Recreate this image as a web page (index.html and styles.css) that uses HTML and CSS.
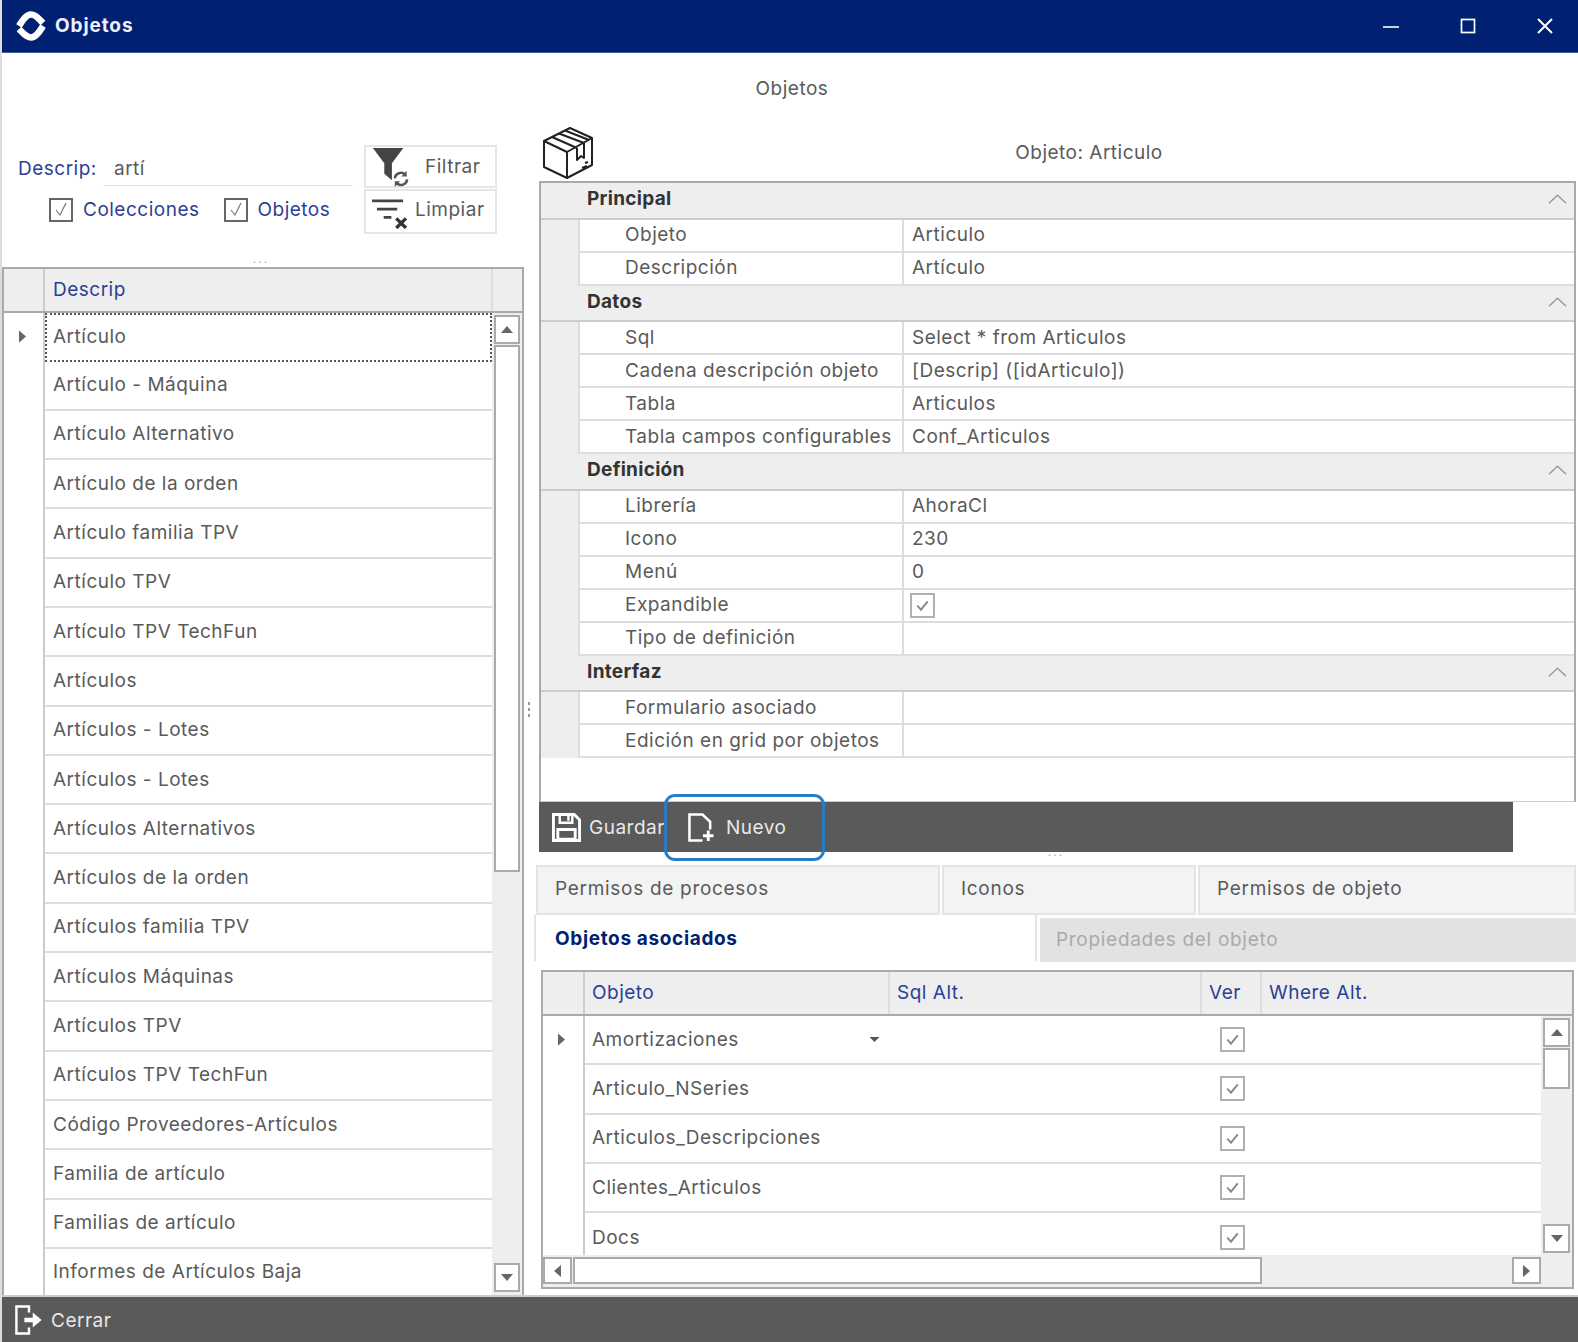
FILE: index.html
```html
<!DOCTYPE html>
<html lang="es">
<head>
<meta charset="utf-8">
<title>Objetos</title>
<link rel="stylesheet" href="styles.css">
</head>
<body>
<div class="window">
  <header class="titlebar">
    <svg class="logo" viewBox="0 0 30 30"><g fill="none" stroke="#fff" stroke-width="6.500"><path d="M3 15 C6 10 10 3.500 15 3.500 C20 3.500 23 8 27 12"/><path d="M27 15 C24 20 20 26.500 15 26.500 C10 26.500 7 22 3 18"/></g></svg>
    <span class="titlebar-text">Objetos</span>
    <div class="winbtns">
      <svg viewBox="0 0 16 16"><path d="M0 9 H16" stroke="#fff" stroke-width="1.6"/></svg>
      <svg viewBox="0 0 16 16"><rect x="1.500" y="1.500" width="13" height="13" fill="none" stroke="#fff" stroke-width="1.700"/></svg>
      <svg viewBox="0 0 16 16"><path d="M1 1 L15 15 M15 1 L1 15" stroke="#fff" stroke-width="2"/></svg>
    </div>
  </header>

  <div class="form-title">Objetos</div>

  <main class="columns">
    <section class="left">
      <div class="filter">
        <div class="filter-fields">
          <div class="search"><span class="label">Descrip:</span><span class="search-value">artí</span></div>
          <div class="checks">
            <span class="check"><i class="box"><svg viewBox="0 0 20 20"><path d="M5 10 L9 15 L15 3" fill="none" stroke="#777" stroke-width="1.200"/></svg></i>Colecciones</span>
            <span class="check"><i class="box"><svg viewBox="0 0 20 20"><path d="M5 10 L9 15 L15 3" fill="none" stroke="#777" stroke-width="1.200"/></svg></i>Objetos</span>
          </div>
        </div>
        <div class="filter-btns">
          <div class="fbtn fbtn-filter">
            <svg class="fbtn-icon" viewBox="0 0 38 42"><path d="M1 1 H33 L21 17 V35 L13 28 V17 Z" fill="#444"/><g fill="none" stroke="#555" stroke-width="2.600"><path d="M24 33 A6.500 6.500 0 0 1 35 29"/><path d="M37 34 A6.500 6.500 0 0 1 26 38"/></g><path d="M36.500 25 V31 H31 Z M24 42 V36 H29.500 Z" fill="#555"/></svg>
            <span>Filtrar</span>
          </div>
          <div class="fbtn fbtn-clear">
            <svg class="fbtn-icon" viewBox="0 0 38 32"><path d="M1 3 H33 M6 11.500 H27 M13 20 H21" stroke="#444" stroke-width="3" fill="none"/><path d="M26 21 L36 31 M36 21 L26 31" stroke="#333" stroke-width="3.400"/></svg>
            <span>Limpiar</span>
          </div>
        </div>
      </div>
      <div class="grip-h">...</div>
      <div class="grid left-grid">
        <div class="grid-head">
          <div class="head-stub"></div>
          <div class="head-cell head-descrip">Descrip</div>
          <div class="head-fill"></div>
        </div>
        <div class="grid-body">
          <div class="stub-col"><svg class="marker" viewBox="0 0 8 14"><path d="M0 0 L8 7 L0 14Z" fill="#666"/></svg></div>
          <div class="rows">
            <div class="row row-current">Artículo</div>
            <div class="row">Artículo - Máquina</div>
            <div class="row">Artículo Alternativo</div>
            <div class="row">Artículo de la orden</div>
            <div class="row">Artículo familia TPV</div>
            <div class="row">Artículo TPV</div>
            <div class="row">Artículo TPV TechFun</div>
            <div class="row">Artículos</div>
            <div class="row">Artículos - Lotes</div>
            <div class="row">Artículos - Lotes</div>
            <div class="row">Artículos Alternativos</div>
            <div class="row">Artículos de la orden</div>
            <div class="row">Artículos familia TPV</div>
            <div class="row">Artículos Máquinas</div>
            <div class="row">Artículos TPV</div>
            <div class="row">Artículos TPV TechFun</div>
            <div class="row">Código Proveedores-Artículos</div>
            <div class="row">Familia de artículo</div>
            <div class="row">Familias de artículo</div>
            <div class="row">Informes de Artículos Baja</div>
          </div>
          <div class="vscroll vscroll-left">
            <div class="sbtn"><svg viewBox="0 0 12 7"><path d="M0 7 L6 0 L12 7Z"/></svg></div>
            <div class="thumb thumb-left"></div>
            <div class="track"></div>
            <div class="sbtn"><svg viewBox="0 0 12 7"><path d="M0 0 L12 0 L6 7Z"/></svg></div>
          </div>
        </div>
      </div>
    </section>

    <div class="grip-v"><i></i><i></i><i></i></div>

    <section class="right">
      <div class="object-head">
        <svg class="box-icon" viewBox="0 0 52 52"><g fill="none" stroke="#222" stroke-width="2" stroke-linejoin="round"><path d="M2 14 L28 1 L50 11 V38 L25 51 L2 40 Z"/><path d="M2 14 L25 25 L50 11"/><path d="M25 25 V51"/><path d="M10 10 L35 21 M17 6.500 L42 16 M23 3.500 L47 13"/><path d="M35 21 V33 L39 29 L42 31 V16"/><path d="M43 36 L46 35 M40 41 L45 39"/></g></svg>
        <div class="object-title">Objeto: Articulo</div>
      </div>

      <div class="props">
        <div class="cat">Principal<svg viewBox="0 0 20 10"><path d="M1 9.500 L10 1 L19 9.500" fill="none" stroke="#999" stroke-width="1.500"/></svg></div>
        <div class="prop"><span>Objeto</span><span>Articulo</span></div>
        <div class="prop"><span>Descripción</span><span>Artículo</span></div>
        <div class="cat">Datos<svg viewBox="0 0 20 10"><path d="M1 9.500 L10 1 L19 9.500" fill="none" stroke="#999" stroke-width="1.500"/></svg></div>
        <div class="prop"><span>Sql</span><span>Select * from Articulos</span></div>
        <div class="prop"><span>Cadena descripción objeto</span><span>[Descrip] ([idArticulo])</span></div>
        <div class="prop"><span>Tabla</span><span>Articulos</span></div>
        <div class="prop"><span>Tabla campos configurables</span><span>Conf_Articulos</span></div>
        <div class="cat">Definición<svg viewBox="0 0 20 10"><path d="M1 9.500 L10 1 L19 9.500" fill="none" stroke="#999" stroke-width="1.500"/></svg></div>
        <div class="prop"><span>Librería</span><span>AhoraCl</span></div>
        <div class="prop"><span>Icono</span><span>230</span></div>
        <div class="prop"><span>Menú</span><span>0</span></div>
        <div class="prop"><span>Expandible</span><span><i class="cb cb-prop"><svg viewBox="0 0 20 20"><path d="M5 10 L8.500 14 L15 6" fill="none" stroke="#888" stroke-width="1.800"/></svg></i></span></div>
        <div class="prop"><span>Tipo de definición</span><span></span></div>
        <div class="cat">Interfaz<svg viewBox="0 0 20 10"><path d="M1 9.500 L10 1 L19 9.500" fill="none" stroke="#999" stroke-width="1.500"/></svg></div>
        <div class="prop"><span>Formulario asociado</span><span></span></div>
        <div class="prop"><span>Edición en grid por objetos</span><span></span></div>
      </div>

      <div class="toolbar">
        <div class="tool tool-save">
          <svg viewBox="0 0 30 30"><path d="M1.500 1.500 H23 L28.500 7 V28.500 H1.500 Z" fill="none" stroke="#fff" stroke-width="3"/><path d="M8 1.500 V10 H21 V1.500 M17 3 V8" fill="none" stroke="#fff" stroke-width="2.500"/><path d="M6 17 H24 V27 H6 Z" fill="none" stroke="#fff" stroke-width="3"/></svg>
          <span>Guardar</span>
        </div>
        <div class="tool tool-new">
          <svg viewBox="0 0 28 30"><path d="M15 28.500 H1.500 V1.500 H15 L23 9 V17" fill="none" stroke="#fff" stroke-width="2.600"/><path d="M21 18 V29 M15.500 23.500 H26.500" stroke="#fff" stroke-width="3"/></svg>
          <span>Nuevo</span>
        </div>
      </div>
      <div class="grip-h grip-right">...</div>

      <div class="tabs tabs-top">
        <div class="tab tab-a">Permisos de procesos</div>
        <div class="tab tab-b">Iconos</div>
        <div class="tab tab-c">Permisos de objeto</div>
      </div>
      <div class="tabs tabs-bottom">
        <div class="tab-active">Objetos asociados</div>
        <div class="tab-disabled">Propiedades del objeto</div>
      </div>

      <div class="grid assoc">
        <div class="grid-head assoc-head">
          <div class="head-stub"></div>
          <div class="head-cell col-obj">Objeto</div>
          <div class="head-cell col-sql">Sql Alt.</div>
          <div class="head-cell col-ver">Ver</div>
          <div class="head-cell col-where">Where Alt.</div>
        </div>
        <div class="grid-body assoc-body">
          <div class="stub-col"><svg class="marker" viewBox="0 0 8 14"><path d="M0 0 L8 7 L0 14Z" fill="#666"/></svg></div>
          <div class="rows">
            <div class="arow"><span class="col-obj cell-combo">Amortizaciones<svg viewBox="0 0 12 6"><path d="M0 0 H12 L6 6Z" fill="#555"/></svg></span><span class="col-sql"></span><span class="col-ver"><i class="cb"><svg viewBox="0 0 20 20"><path d="M5 10 L8.500 14 L15 6" fill="none" stroke="#888" stroke-width="1.800"/></svg></i></span></div>
            <div class="arow"><span class="col-obj">Articulo_NSeries</span><span class="col-sql"></span><span class="col-ver"><i class="cb"><svg viewBox="0 0 20 20"><path d="M5 10 L8.500 14 L15 6" fill="none" stroke="#888" stroke-width="1.800"/></svg></i></span></div>
            <div class="arow"><span class="col-obj">Articulos_Descripciones</span><span class="col-sql"></span><span class="col-ver"><i class="cb"><svg viewBox="0 0 20 20"><path d="M5 10 L8.500 14 L15 6" fill="none" stroke="#888" stroke-width="1.800"/></svg></i></span></div>
            <div class="arow"><span class="col-obj">Clientes_Articulos</span><span class="col-sql"></span><span class="col-ver"><i class="cb"><svg viewBox="0 0 20 20"><path d="M5 10 L8.500 14 L15 6" fill="none" stroke="#888" stroke-width="1.800"/></svg></i></span></div>
            <div class="arow"><span class="col-obj">Docs</span><span class="col-sql"></span><span class="col-ver"><i class="cb"><svg viewBox="0 0 20 20"><path d="M5 10 L8.500 14 L15 6" fill="none" stroke="#888" stroke-width="1.800"/></svg></i></span></div>
          </div>
          <div class="vscroll vscroll-assoc">
            <div class="sbtn"><svg viewBox="0 0 12 7"><path d="M0 7 L6 0 L12 7Z"/></svg></div>
            <div class="thumb thumb-assoc"></div>
            <div class="track"></div>
            <div class="sbtn"><svg viewBox="0 0 12 7"><path d="M0 0 L12 0 L6 7Z"/></svg></div>
          </div>
        </div>
        <div class="hscroll">
          <div class="sbtn sbtn-h"><svg viewBox="0 0 7 12"><path d="M7 0 L0 6 L7 12Z"/></svg></div>
          <div class="hthumb"></div>
          <div class="track"></div>
          <div class="sbtn sbtn-h"><svg viewBox="0 0 7 12"><path d="M0 0 L7 6 L0 12Z"/></svg></div>
        </div>
      </div>
    </section>
  </main>

  <footer class="footer">
    <svg viewBox="0 0 30 32"><path d="M15 8 V1.500 H1.500 V30.500 H15 V24" fill="none" stroke="#fff" stroke-width="2.600"/><path d="M10 13.500 H19 V8 L28.500 16 L19 24 V18.500 H10 Z" fill="#fff"/></svg>
    <span>Cerrar</span>
  </footer>
</div>
</body>
</html>
```

FILE: styles.css
```css
* { box-sizing: border-box; }
html, body { margin: 0; height: 100%; }
body {
  font-family: Inter, "Noto Sans", sans-serif;
  font-size: 19px;
  letter-spacing: 0.5px;
  line-height: 22px;
  color: #5a5a5a;
  background: #fff;
  overflow: hidden;
}
i { font-style: normal; }
svg { display: block; flex: none; }

.window {
  width: 1578px;
  height: 1342px;
  display: flex;
  flex-direction: column;
  border-left: 2px solid #ddd;
}

/* Title bar */
.titlebar {
  height: 53px;
  flex: none;
  background: #002171;
  border-bottom: 1px solid #3d5a9e;
  display: flex;
  align-items: center;
  padding-left: 14px;
  color: #fff;
}
.logo { width: 30px; height: 30px; }
.titlebar-text { margin-left: 9px; font-weight: 700; font-size: 19px; letter-spacing: 0.9px; color: #eef; }
.winbtns { margin-left: auto; display: flex; gap: 61px; padding-right: 25px; }
.winbtns svg { width: 16px; height: 16px; }

.form-title {
  height: 73px;
  flex: none;
  padding-top: 25px;
  padding-left: 4px;
  text-align: center;
}

.columns { flex: 1; display: flex; min-height: 0; }

/* Left column */
.left { width: 522px; flex: none; display: flex; flex-direction: column; }
.filter { height: 132px; display: flex; padding: 19px 27px 0 16px; flex: none; }
.filter-fields { flex: 1; min-width: 0; }
.search { display: flex; align-items: flex-end; height: 41px; }
.label { color: #2b3f97; width: 85px; flex: none; padding-bottom: 6px; }
.search-value {
  width: 250px;
  height: 41px;
  line-height: 47px;
  padding-left: 11px;
  border-bottom: 1px solid #e4e4e4;
}
.checks { display: flex; padding-left: 31px; margin-top: 12px; gap: 24px; }
.check { display: flex; align-items: center; gap: 10px; color: #2b3f97; height: 24px; white-space: nowrap; }
.box { width: 24px; height: 24px; border: 2px solid #666; background: #fff; display: block; }
.box svg { width: 20px; height: 20px; }
.filter-btns { width: 133px; flex: none; display: flex; flex-direction: column; gap: 1px; margin-left: 10px; height: 90px; }
.fbtn { border: 2px solid #e6e6e6; display: flex; align-items: center; }
.fbtn-filter { height: 43px; padding-left: 5px; gap: 16px; }
.fbtn-clear { height: 45px; padding-left: 5px; gap: 7px; }
.fbtn-filter .fbtn-icon { width: 38px; height: 40px; }
.fbtn-clear .fbtn-icon { width: 37px; height: 31px; margin-top: 4px; }
.fbtn-clear span { padding-bottom: 3px; }

.grip-h {
  height: 9px;
  flex: none;
  line-height: 2px;
  text-align: center;
  color: #aaa;
  letter-spacing: 2px;
  font-size: 12px;
  padding-right: 4px;
}

.grid { border: 2px solid #aaa; display: flex; flex-direction: column; min-height: 0; }
.left-grid { flex: 1; border-bottom: 0; background: #fff; }
.grid-head { display: flex; height: 44px; flex: none; background: #eee; border-bottom: 2px solid #aaa; color: #2b3f97; }
.head-stub { width: 41px; flex: none; border-right: 2px solid #ccc; }
.head-cell { display: flex; align-items: center; padding-left: 8px; border-right: 2px solid #ddd; }
.head-descrip { width: 448px; flex: none; }
.head-fill { flex: 1; }

.grid-body { flex: 1; display: flex; min-height: 0; overflow: hidden; }
.stub-col { width: 41px; flex: none; border-right: 2px solid #ccc; }
.marker { width: 7px; height: 13px; margin: 17px 0 0 15px; }
.rows { flex: 1; min-width: 0; }
.row {
  height: 49.3px;
  padding-left: 8px;
  border-bottom: 2px solid #ddd;
  display: flex;
  align-items: center;
  white-space: nowrap;
}
.row-current { height: 48.500px; outline: 2px dotted #555; outline-offset: -2px; border-bottom: 0; }

.vscroll { flex: none; background: #eee; display: flex; flex-direction: column; }
.vscroll-left { width: 30px; padding: 2px 2px 3px 2px; }
.vscroll-assoc { width: 31px; padding: 2px; }
.sbtn {
  height: 29px;
  flex: none;
  background: #fff;
  border: 2px solid #aaa;
  display: flex;
  align-items: center;
  justify-content: center;
}
.sbtn svg { width: 12px; height: 7px; fill: #666; }
.thumb { background: #fff; border: 2px solid #aaa; flex: none; }
.thumb-left { height: 527px; margin-top: 1px; }
.thumb-assoc { height: 41px; margin-top: 1px; }
.track { flex: 1; }

/* Splitter */
.grip-v { width: 10px; flex: none; display: flex; flex-direction: column; align-items: center; gap: 3px; padding-top: 576px; }
.grip-v i { width: 2px; height: 3px; background: #999; }

/* Right column */
.right { flex: 1; min-width: 0; display: flex; flex-direction: column; }
.object-head { height: 55px; flex: none; display: flex; padding-left: 8px; align-items: flex-start; }
.box-icon { width: 52px; height: 52px; margin-top: 1px; }
.object-title { flex: 1; text-align: center; padding-top: 16px; margin-left: 6px; }

.props {
  margin-left: 5px;
  margin-right: 2px;
  height: 621px;
  flex: none;
  border: 2px solid #aaa;
  border-bottom: 1px solid #ccc;
  background: #fff;
}
.cat {
  height: 36.5px;
  background: #eee;
  font-weight: 700;
  font-size: 19px;
  letter-spacing: 0.3px;
  color: #333;
  display: flex;
  align-items: center;
  justify-content: space-between;
  padding: 0 7px 2px 46px;
  border-bottom: 2px solid #ccc;
}
.cat svg { width: 19px; height: 10px; }
.prop { display: flex; height: 33px; background: #eee; padding-left: 37px; }
.prop span { display: flex; align-items: center; background: #fff; border-bottom: 2px solid #ddd; min-width: 0; }
.prop span:first-child { width: 326px; flex: none; padding-left: 45px; border-left: 2px solid #ddd; border-right: 2px solid #ddd; white-space: nowrap; }
.prop span:last-child { flex: 1; padding-left: 8px; }
.cb { display: block; width: 25px; height: 25px; border: 2px solid #b0b0b0; background: #fff; }
.cb svg { width: 21px; height: 21px; }
.cb-prop { margin-left: -2px; }

.toolbar {
  margin-left: 5px;
  width: 974px;
  height: 50px;
  flex: none;
  background: #5a5a5a;
  display: flex;
  color: #e8e8e8;
  position: relative;
}
.tool { display: flex; align-items: center; }
.tool-save { padding-left: 13px; gap: 8px; width: 125px; white-space: nowrap; }
.tool-save svg { width: 29px; height: 29px; }
.tool-save span { padding-top: 2px; }
.tool-new {
  position: absolute;
  left: 125px;
  top: -8px;
  width: 161px;
  height: 67px;
  border: 3px solid #2a7cc4;
  border-radius: 11px;
  padding-left: 21px;
  gap: 11px;
}
.tool-new svg { width: 27px; height: 29px; }

.grip-right { height: 13px; line-height: 0; padding-right: 0; }

/* Tabs */
.tabs { display: flex; flex: none; letter-spacing: 0.7px; }
.tabs-top { height: 50px; margin-left: 2px; margin-right: 2px; gap: 2px; }
.tab {
  background: #f3f3f3;
  border: 2px solid #e4e4e4;
  display: flex;
  align-items: center;
  padding: 0 0 2px 17px;
}
.tab-a { width: 404px; }
.tab-b { width: 254px; }
.tab-c { flex: 1; }
.tabs-bottom { height: 55px; }
.tab-active {
  width: 503px;
  height: 46px;
  border-left: 2px solid #e4e4e4;
  border-right: 2px solid #e4e4e4;
  padding: 2px 0 0 19px;
  display: flex;
  align-items: center;
  font-weight: 700;
  letter-spacing: 0.65px;
  color: #002171;
  background: #fff;
}
.tab-disabled {
  margin: 3px 2px 0 3px;
  height: 44px;
  flex: 1;
  background: #e2e2e2;
  color: #aaa;
  display: flex;
  align-items: center;
  padding-left: 16px;
}

/* Associated grid */
.assoc {
  margin-left: 7px;
  margin-right: 4px;
  height: 319px;
  flex: none;
}
.assoc .head-stub, .assoc .stub-col { width: 42px; }
.assoc .head-cell { padding-left: 7px; }
.col-obj { width: 305px; flex: none; }
.col-sql { width: 312px; flex: none; }
.col-ver { width: 60px; flex: none; }
.col-where { flex: 1; border-right: 0; }
.assoc-body { flex: 1; }
.arow {
  height: 49.300px;
  display: flex;
  align-items: center;
  border-bottom: 2px solid #ddd;
}
.arow:last-child { border-bottom: 0; }
.arow .col-obj { padding-left: 7px; }
.cell-combo { display: flex; align-items: center; justify-content: space-between; padding-right: 10px; }
.cell-combo svg { width: 11px; height: 5px; }
.arow .col-ver { display: flex; justify-content: center; padding-left: 1px; }
.hscroll { height: 32px; flex: none; background: #eee; display: flex; padding: 2px 31px 3px 0; }
.sbtn-h { width: 29px; height: 27px; }
.sbtn-h svg { width: 7px; height: 12px; }
.hthumb { width: 689px; background: #fff; border: 2px solid #aaa; margin-left: 1px; }

/* Footer */
.footer {
  height: 47px;
  flex: none;
  background: #5a5a5a;
  border-top: 2px solid #ccc;
  color: #e8e8e8;
  display: flex;
  align-items: center;
  padding-left: 13px;
  gap: 8px;
}
.footer svg { width: 28px; height: 30px; }
.footer span { padding-top: 2px; }
```
